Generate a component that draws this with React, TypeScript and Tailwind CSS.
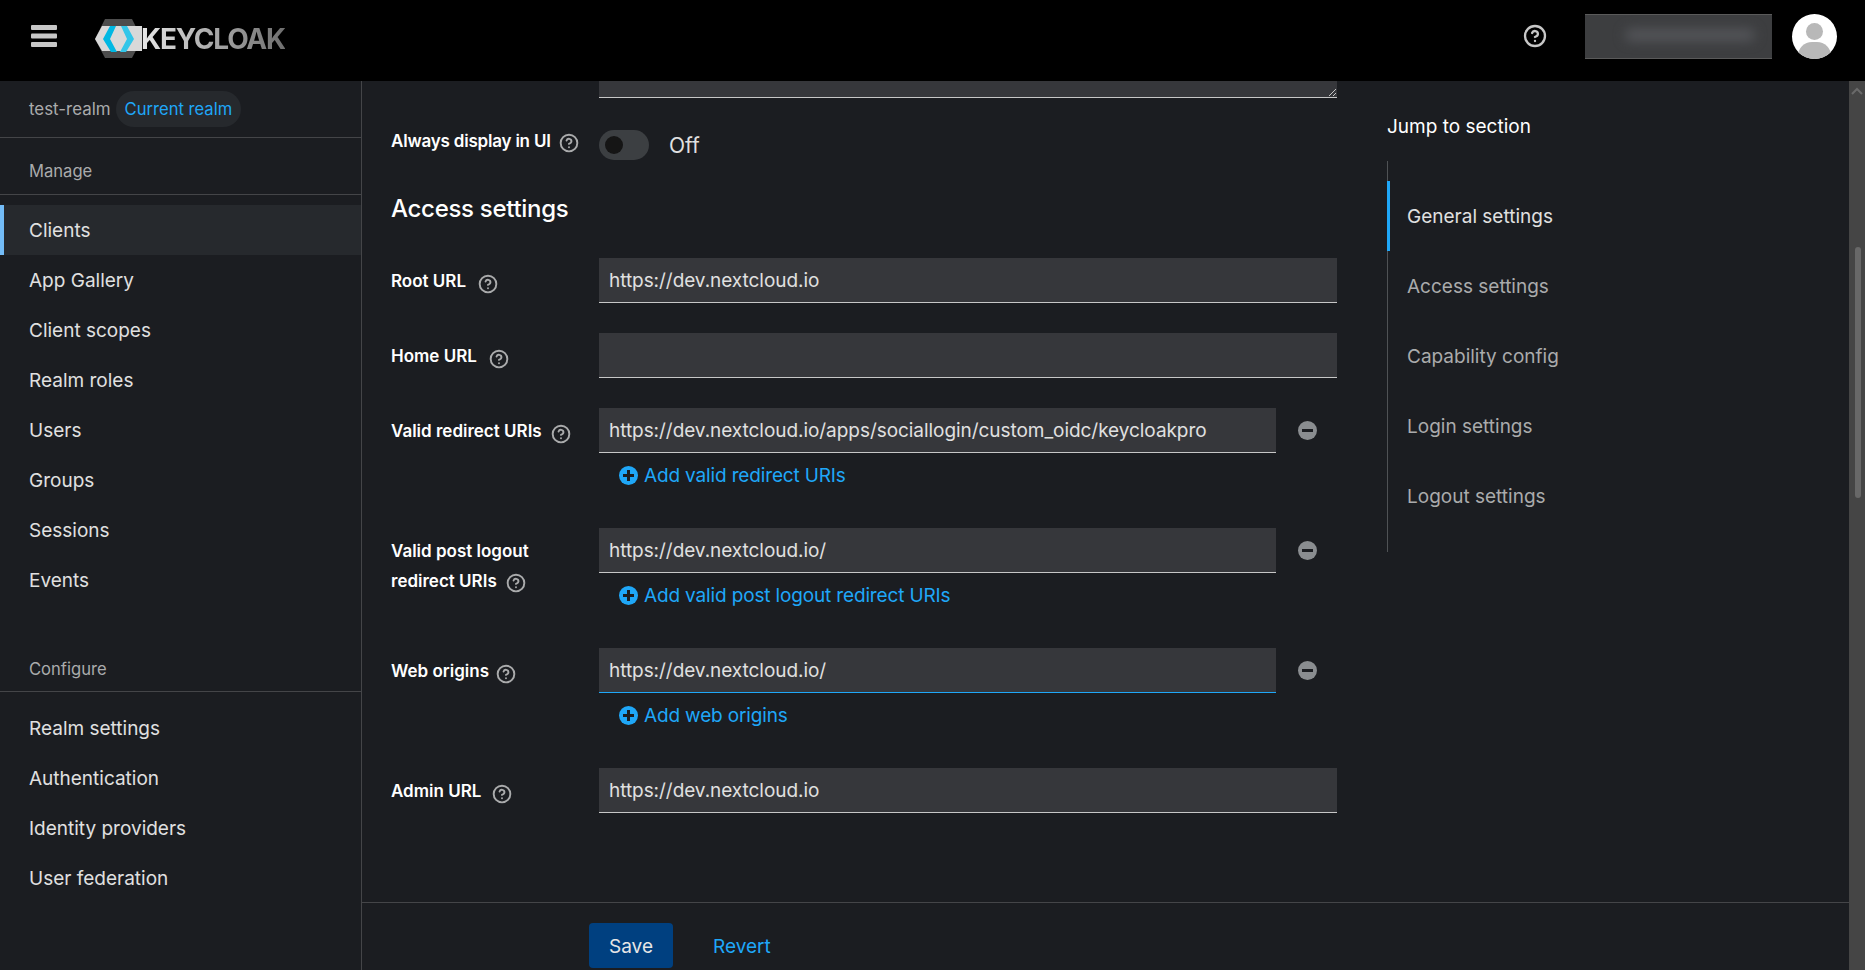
import { CircleHelp } from "lucide-react";

const FONT = "font-['Inter','Noto_Sans',sans-serif]";

const manageItems = ["Clients", "App Gallery", "Client scopes", "Realm roles", "Users", "Groups", "Sessions", "Events"];
const configureItems = ["Realm settings", "Authentication", "Identity providers", "User federation"];
const sections = ["General settings", "Access settings", "Capability config", "Login settings", "Logout settings"];

function Logo() {
  return (
    <div className="flex items-center">
      <svg width="50" height="40" viewBox="0 0 50 40" className="shrink-0">
        <polygon points="10,0 37,0 47,20 37,39 10,39 0,20" fill="#4d4d4d" />
        <polygon points="0,20 7,7 47,7 47,32 7,32" fill="#d9d9d9" />
        <polygon points="8,20 15,7 21,7 15,20 22,33 16,33" fill="#00b8e3" />
        <polygon points="39,20 32,7 26,7 32,20 25,33 31,33" fill="#33c6e9" />
      </svg>
      <span className="-ml-[4px] bg-gradient-to-r from-[#e8e8e8] to-[#6f6f6f] bg-clip-text text-[28px] leading-none font-bold tracking-[-1.2px] text-transparent">
        KEYCLOAK
      </span>
    </div>
  );
}

function Burger() {
  return (
    <svg width="26" height="22" viewBox="0 0 26 22" className="shrink-0">
      <rect width="26" height="5" rx="1" fill="#c7c7c7" />
      <rect y="8.5" width="26" height="5" rx="1" fill="#c7c7c7" />
      <rect y="17" width="26" height="5" rx="1" fill="#c7c7c7" />
    </svg>
  );
}

function NavItem({ label, active }: { label: string; active?: boolean }) {
  return (
    <div
      className={
        "flex h-[50px] items-center pt-[2px] pl-[29px] text-[19px] text-[#e0e0e0] " +
        (active ? "border-l-4 border-[#73bcf7] bg-[#26292d] !pl-[25px]" : "")
      }
    >
      {label}
    </div>
  );
}

function Help({ className = "" }: { className?: string }) {
  return <CircleHelp size={20} strokeWidth={2.3} className={"shrink-0 text-[#aaabac] " + className} />;
}

function PlusIcon() {
  return (
    <svg width="19" height="19" viewBox="0 0 19 19" className="shrink-0">
      <circle cx="9.5" cy="9.5" r="9.5" fill="#1fa7f8" />
      <rect x="4" y="8" width="11" height="3" fill="#1b1d21" />
      <rect x="8" y="4" width="3" height="11" fill="#1b1d21" />
    </svg>
  );
}

function MinusIcon() {
  return (
    <svg width="19" height="19" viewBox="0 0 19 19" className="shrink-0">
      <circle cx="9.5" cy="9.5" r="9.5" fill="#8a8d90" />
      <rect x="4" y="8" width="11" height="3" fill="#1b1d21" />
    </svg>
  );
}

function TextBox({ value, focused }: { value?: string; focused?: boolean }) {
  return (
    <div
      className={
        "flex h-[45px] w-full items-center border-b bg-[#36373b] px-[10px] pt-[3px] text-[19px] tracking-[-0.05px] text-[#e0e0e0] " +
        (focused ? "border-[#1fa7f8]" : "border-[#c7c7c7]")
      }
    >
      {value}
    </div>
  );
}

function MultiField({ value, add, focused }: { value: string; add: string; focused?: boolean }) {
  return (
    <div className="w-[738px]">
      <div className="flex items-center">
        <div className="w-[677px]">
          <TextBox value={value} focused={focused} />
        </div>
        <div className="ml-[22px]">
          <MinusIcon />
        </div>
      </div>
      <div className="mt-[12px] flex h-[20px] items-center pl-[20px] text-[19px] tracking-[-0.15px] text-[#1fa7f8]">
        <PlusIcon />
        <span className="ml-[6px] pt-[2px]">{add}</span>
      </div>
    </div>
  );
}

function Label({ children, gap = "ml-[12px]" }: { children: string; gap?: string }) {
  return (
    <label className="flex h-[45px] w-[208px] items-center pt-[2px] font-semibold text-white">
      {children}
      <Help className={gap + " translate-y-[2px]"} />
    </label>
  );
}

export default function App() {
  return (
    <div className={"flex h-[970px] w-full flex-col overflow-hidden bg-[#1b1d21] text-[#e0e0e0] " + FONT}>
      <header className="flex h-[81px] shrink-0 items-center bg-black pb-[9px]">
        <div className="ml-[31px]">
          <Burger />
        </div>
        <div className="ml-[38px] translate-y-[3px]">
          <Logo />
        </div>
        <div className="ml-auto flex items-center">
          <CircleHelp size={24} strokeWidth={2.3} className="text-[#c7c7c7]" />
          <div className="relative ml-[38px] h-[45px] w-[187px] overflow-hidden border-t border-b border-[#5a5a5a] bg-[#3d3e40]">
            <div className="absolute top-[14px] left-[40px] h-[12px] w-[130px] rounded-full bg-[#55565a] blur-[6px]" />
          </div>
          <div className="relative mr-[28px] ml-[20px] h-[45px] w-[45px] overflow-hidden rounded-full bg-white">
            <div className="absolute top-[9px] left-[14px] h-[17px] w-[17px] rounded-full bg-[#b8b8b8]" />
            <div className="absolute top-[28px] left-[6px] h-[24px] w-[33px] rounded-t-[14px] bg-[#b8b8b8]" />
          </div>
        </div>
      </header>

      <div className="flex min-h-0 flex-1">
        <aside className="w-[362px] shrink-0 border-r border-[#444548]">
          <div className="flex h-[57px] items-center border-b border-[#444548] pl-[29px] text-[16.9px]">
            <span className="translate-y-[1px] text-[#aaabac]">test-realm</span>
            <span className="ml-[5px] flex h-[36px] items-center rounded-full bg-[#26292d] px-[9px] pt-[1px] text-[16.6px] text-[#1fa7f8]">
              Current realm
            </span>
          </div>
          <div className="flex h-[57px] items-center border-b border-[#444548] pt-[10px] pl-[29px] text-[16.6px] text-[#aaabac]">
            Manage
          </div>
          <nav className="mt-[10px]">
            {manageItems.map((item) => (
              <NavItem key={item} label={item} active={item === "Clients"} />
            ))}
          </nav>
          <div className="mt-[42px] flex h-[45px] items-center border-b border-[#444548] pt-[1px] pl-[29px] text-[16.6px] text-[#aaabac]">
            Configure
          </div>
          <nav className="mt-[11px]">
            {configureItems.map((item) => (
              <NavItem key={item} label={item} />
            ))}
          </nav>
        </aside>

        <div className="flex min-w-0 flex-1 flex-col">
          <div className="flex min-h-0 flex-1">
            <main className="w-[1025px] shrink-0 pl-[29px] text-[17px]">
              <div className="relative ml-[208px] h-[17px] w-[738px] border-b border-[#c7c7c7] bg-[#36373b]">
                <svg width="9" height="9" viewBox="0 0 9 9" className="absolute right-0 bottom-0">
                  <path d="M1 8 L8 1 M5 8 L8 5" stroke="#c7c7c7" strokeWidth="1" />
                </svg>
              </div>

              <div className="mt-[32px] flex h-[30px] items-center">
                <label className="flex w-[208px] -translate-y-[3px] items-center font-semibold tracking-[-0.2px] text-white">
                  Always display in UI
                  <Help className="ml-[8px] translate-y-[1px]" />
                </label>
                <div className="relative h-[30px] w-[50px] rounded-full bg-[#3c3f42]">
                  <div className="absolute top-[6px] left-[6px] h-[18px] w-[18px] rounded-full bg-[#151515]" />
                </div>
                <span className="ml-[20px] pt-[2px] text-[21px]">Off</span>
              </div>

              <h2 className="mt-[32px] text-[24px] leading-[34px] font-medium tracking-[-0.3px] text-white">Access settings</h2>

              <div className="mt-[32px] flex">
                <Label>Root URL</Label>
                <div className="w-[738px]">
                  <TextBox value="https://dev.nextcloud.io" />
                </div>
              </div>

              <div className="mt-[30px] flex">
                <Label>Home URL</Label>
                <div className="w-[738px]">
                  <TextBox />
                </div>
              </div>

              <div className="mt-[30px] flex">
                <Label gap="ml-[9px]">Valid redirect URIs</Label>
                <MultiField value="https://dev.nextcloud.io/apps/sociallogin/custom_oidc/keycloakpro" add="Add valid redirect URIs" />
              </div>

              <div className="mt-[43px] flex">
                <label className="w-[208px] pt-[8px] leading-[30px] font-semibold text-white">
                  Valid post logout
                  <br />
                  <span className="inline-flex items-center">
                    redirect URIs
                    <Help className="ml-[9px] translate-y-[2px]" />
                  </span>
                </label>
                <MultiField value="https://dev.nextcloud.io/" add="Add valid post logout redirect URIs" />
              </div>

              <div className="mt-[43px] flex">
                <Label gap="ml-[7px]">Web origins</Label>
                <MultiField value="https://dev.nextcloud.io/" add="Add web origins" focused />
              </div>

              <div className="mt-[43px] flex">
                <Label gap="ml-[11px]">Admin URL</Label>
                <div className="w-[738px]">
                  <TextBox value="https://dev.nextcloud.io" />
                </div>
              </div>
            </main>

            <div className="pt-[34px]">
              <div className="text-[19px] leading-[24px] text-white">Jump to section</div>
              <ul className="mt-[22px] h-[391px] border-l border-[#4f5255] pt-[20px]">
                {sections.map((s, i) => (
                  <li
                    key={s}
                    className={
                      "-ml-px flex h-[70px] w-[200px] items-center border-l-[3px] pt-[2px] pl-[17px] text-[19px] " +
                      (i === 0 ? "border-[#1fa7f8] text-[#e0e0e0]" : "border-transparent text-[#aaabac]")
                    }
                  >
                    {s}
                  </li>
                ))}
              </ul>
            </div>
          </div>

          <footer className="flex h-[68px] shrink-0 items-start border-t border-[#444548] pt-[20px] pl-[227px] text-[19px]">
            <button className="h-[45px] w-[84px] rounded-[4px] bg-[#004080] pt-[3px] text-[#e6e6e6]">Save</button>
            <button className="ml-[40px] h-[45px] pt-[3px] text-[#1fa7f8]">Revert</button>
          </footer>
        </div>

        <div className="relative w-[16px] shrink-0 bg-[#454545]">
          <svg width="16" height="10" viewBox="0 0 16 10" className="absolute top-[5px] left-0">
            <path d="M3 8 L8 3 L13 8" stroke="#6a6a6a" strokeWidth="2" fill="none" />
          </svg>
          <div className="absolute top-[166px] left-[6px] h-[251px] w-[6px] rounded-full bg-[#686868]" />
        </div>
      </div>
    </div>
  );
}
